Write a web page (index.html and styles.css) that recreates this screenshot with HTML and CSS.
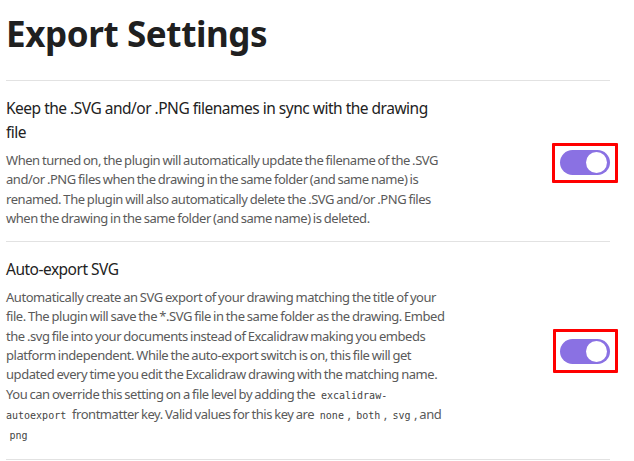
FILE: index.html
```html
<!DOCTYPE html>
<html>
<head>
<meta charset="utf-8">
<link rel="stylesheet" href="styles.css">
</head>
<body>
<main class="page">
  <h1 class="title">Export Settings</h1>

  <section class="setting">
    <div class="info">
      <div class="name">Keep the .SVG and/or .PNG filenames in sync with the drawing file</div>
      <div class="desc">When turned on, the plugin will automatically update the filename of the .SVG and/or .PNG files when the drawing in the same folder (and same name) is renamed. The plugin will also automatically delete the .SVG and/or .PNG files when the drawing in the same folder (and same name) is deleted.</div>
    </div>
    <div class="control">
      <div class="toggle on"><span class="knob"></span></div>
      <span class="mark mark-a"></span>
    </div>
  </section>

  <section class="setting">
    <div class="info">
      <div class="name">Auto-export SVG</div>
      <div class="desc">Automatically create an SVG export of your drawing matching the title of your file. The plugin will save the *.SVG file in the same folder as the drawing. Embed the .svg file into your documents instead of Excalidraw making you embeds platform independent. While the auto-export switch is on, this file will get updated every time you edit the Excalidraw drawing with the matching name. You can override this setting on a file level by adding the <code>excalidraw-autoexport</code> frontmatter key. Valid values for this key are <code>none</code>, <code>both</code>, <code>svg</code>, and <code>png</code></div>
    </div>
    <div class="control">
      <div class="toggle on"><span class="knob"></span></div>
      <span class="mark mark-b"></span>
    </div>
  </section>
</main>
</body>
</html>
```
FILE: styles.css
```css
html, body {
  margin: 0;
  padding: 0;
  background: #ffffff;
}

body {
  font-family: "Noto Sans", "Open Sans", sans-serif;
  color: #222222;
}

.page {
  width: 604px;
  padding: 0 0 0 6px;
}

.title {
  margin: 13px 0 25px 0;
  font-size: 35px;
  line-height: 42px;
  font-weight: 700;
  letter-spacing: -0.4px;
  color: #202020;
}

.setting {
  display: grid;
  grid-template-columns: 440px 1fr;
  align-items: center;
  border-top: 1px solid #e2e2e2;
  padding: 15px 0 13px 0;
}

.setting:last-child {
  border-bottom: 1px solid #e2e2e2;
}

.name {
  font-size: 15.5px;
  line-height: 24px;
  letter-spacing: -0.5px;
  color: #222222;
}

.desc {
  margin-top: 7px;
  font-size: 13px;
  line-height: 19.3px;
  letter-spacing: -0.45px;
  word-spacing: -0.7px;
  color: #5a5a5a;
}

code {
  font-family: "DejaVu Sans Mono", "Liberation Mono", monospace;
  font-size: 10px;
  letter-spacing: 0;
  word-spacing: 0;
  padding: 0 3.5px;
  color: #444444;
}

.control {
  position: relative;
  justify-self: end;
  display: flex;
}

.toggle {
  position: relative;
  width: 50px;
  height: 25px;
  border-radius: 13px;
  background: #8a71e3;
}

.knob {
  position: absolute;
  top: 2px;
  right: 3px;
  width: 21px;
  height: 21px;
  border-radius: 50%;
  background: #ffffff;
}

.mark {
  position: absolute;
  border: 3px solid #ff0000;
  border-radius: 1px;
}

.mark-a {
  left: -8px;
  right: -8px;
  top: -7px;
  bottom: -8px;
}

.mark-b {
  left: -7px;
  right: -8px;
  top: -10px;
  bottom: -9px;
}
```
